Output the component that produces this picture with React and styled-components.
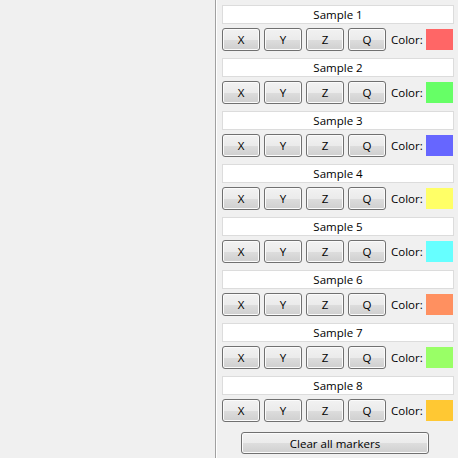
import React from 'react';
import styled, { createGlobalStyle } from 'styled-components';

const GlobalStyle = createGlobalStyle`
  html, body {
    margin: 0;
    padding: 0;
    background: #f0f0f0;
  }
  body {
    font-family: "Open Sans", "Noto Sans", "Liberation Sans", sans-serif;
    font-size: 11.5px;
    color: #000;
  }
`;

const samples = [
  { name: 'Sample 1', color: '#ff6666' },
  { name: 'Sample 2', color: '#66ff66' },
  { name: 'Sample 3', color: '#6666ff' },
  { name: 'Sample 4', color: '#ffff66' },
  { name: 'Sample 5', color: '#66ffff' },
  { name: 'Sample 6', color: '#ff9060' },
  { name: 'Sample 7', color: '#99ff66' },
  { name: 'Sample 8', color: '#ffc833' },
];

const App = () => {
  return (
    <>
      <GlobalStyle />
      <Window>
        <Canvas />
        <Divider />
        <Panel>
          {samples.map((s) => (
            <SampleBlock key={s.name}>
              <SampleLabel>{s.name}</SampleLabel>
              <ButtonRow>
                <AxisButton>X</AxisButton>
                <AxisButton>Y</AxisButton>
                <AxisButton>Z</AxisButton>
                <AxisButton>Q</AxisButton>
                <ColorText>Color:</ColorText>
                <Swatch $color={s.color} />
              </ButtonRow>
            </SampleBlock>
          ))}
          <Footer>
            <ClearButton>Clear all markers</ClearButton>
          </Footer>
        </Panel>
      </Window>
    </>
  );
};

export default App;

const Window = styled.div`
  display: flex;
  width: 458px;
  height: 458px;
  overflow: hidden;
`;

const Canvas = styled.div`
  flex: 0 0 215px;
  background: #f0f0f0;
`;

const Divider = styled.div`
  flex: 0 0 1px;
  border-left: 1px solid #a0a0a0;
  background: #ffffff;
`;

const Panel = styled.div`
  flex: 1;
  min-width: 0;
  padding: 5px 4px 0 5px;
  display: flex;
  flex-direction: column;
`;

const SampleBlock = styled.div`
  display: flex;
  flex-direction: column;
  gap: 4px;
  margin-bottom: 7px;
`;

const SampleLabel = styled.div`
  box-sizing: content-box;
  height: 16px;
  padding-top: 1px;
  background: #ffffff;
  border: 1px solid #dcdcdc;
  display: flex;
  align-items: center;
  justify-content: center;
  line-height: 1;
`;

const ButtonRow = styled.div`
  display: flex;
  align-items: center;
  gap: 4px;
  height: 23px;
`;

const buttonLook = `
  box-sizing: border-box;
  flex-shrink: 0;
  border: 1px solid #707070;
  border-radius: 3px;
  background: linear-gradient(#f2f2f2 0%, #ebebeb 50%, #dddddd 51%, #cfcfcf 100%);
  box-shadow: inset 0 0 0 1px #fbfbfb;
  font-family: inherit;
  font-size: 11.5px;
  color: #000;
  padding: 0;
  display: flex;
  align-items: center;
  justify-content: center;
`;

const AxisButton = styled.button`
  ${buttonLook}
  width: 38px;
  height: 23px;
`;

const ColorText = styled.span`
  flex: 0 0 31px;
  min-width: 0;
  margin-left: 1px;
  white-space: nowrap;
`;

const Swatch = styled.div`
  flex: 0 0 27px;
  height: 21px;
  background: ${(p) => p.$color};
`;

const Footer = styled.div`
  display: flex;
  justify-content: center;
  padding-top: 3px;
  padding-right: 6px;
`;

const ClearButton = styled.button`
  ${buttonLook}
  width: 188px;
  height: 22px;
`;
